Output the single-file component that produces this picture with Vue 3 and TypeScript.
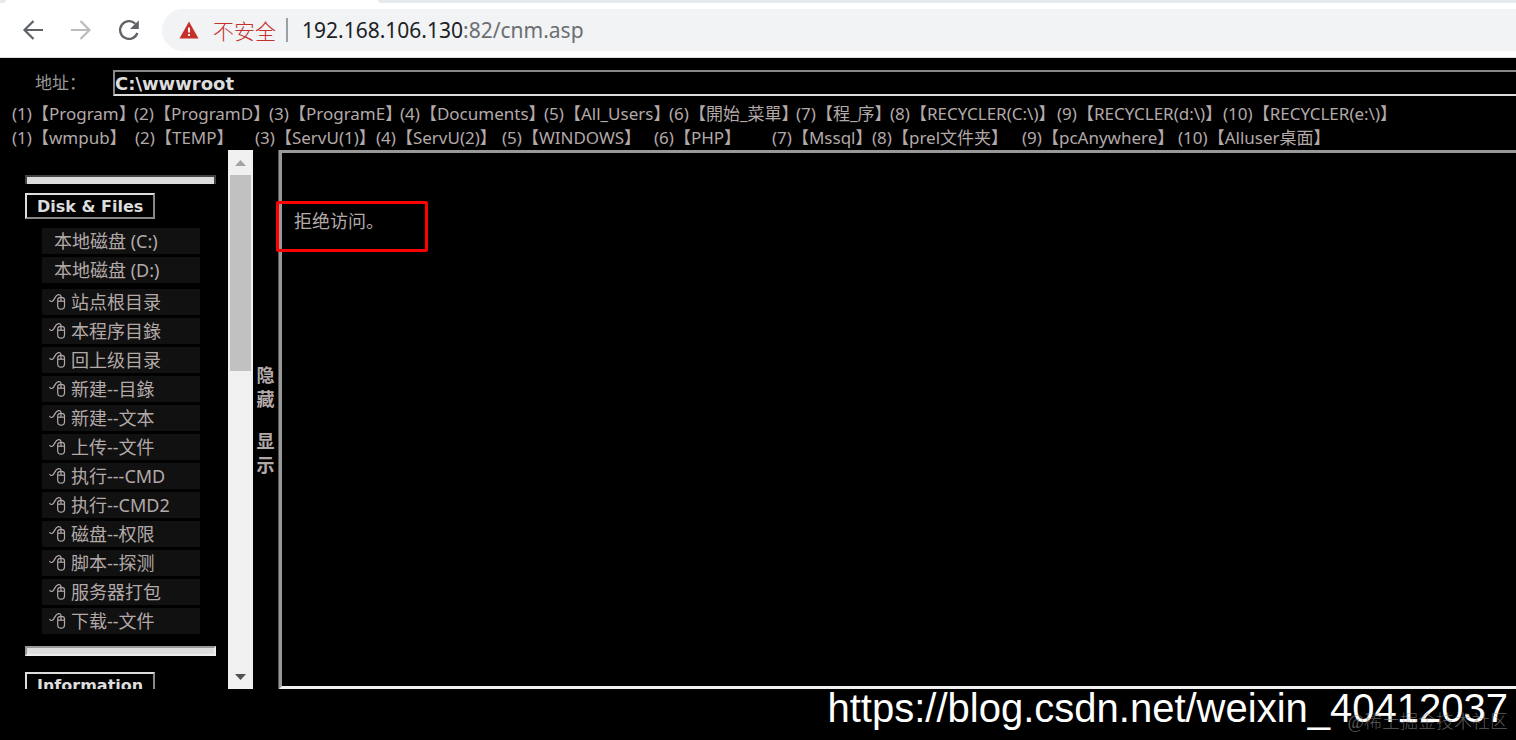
<script setup lang="ts">
import { ref } from 'vue'

interface NavItem {
  label: string
  icon: boolean
}

const path = ref<string>('C:\\wwwroot')

const systemLinks: string[] = [
  '(1)【Program】',
  '(2)【ProgramD】',
  '(3)【ProgramE】',
  '(4)【Documents】',
  '(5)【All_Users】',
  '(6)【開始_菜單】',
  '(7)【程_序】',
  '(8)【RECYCLER(C:\\)】',
  '(9)【RECYCLER(d:\\)】',
  '(10)【RECYCLER(e:\\)】',
]

const serviceLinks: string[] = [
  '(1)【wmpub】',
  '(2)【TEMP】',
  '(3)【ServU(1)】',
  '(4)【ServU(2)】',
  '(5)【WINDOWS】',
  '(6)【PHP】',
  '(7)【Mssql】',
  '(8)【prel文件夹】',
  '(9)【pcAnywhere】',
  '(10)【Alluser桌面】',
]

const drives: NavItem[] = [
  { label: '本地磁盘 (C:)', icon: false },
  { label: '本地磁盘 (D:)', icon: false },
]

const actions: NavItem[] = [
  '站点根目录',
  '本程序目錄',
  '回上级目录',
  '新建--目錄',
  '新建--文本',
  '上传--文件',
  '执行---CMD',
  '执行--CMD2',
  '磁盘--权限',
  '脚本--探测',
  '服务器打包',
  '下载--文件',
].map((label) => ({ label, icon: true }))

const groups: NavItem[][] = [drives, actions]
</script>

<template>
  <div class="page">
    <div class="tab-strip"><div class="tab"></div></div>
    <header class="toolbar">
      <button class="tool" type="button" aria-label="Back">
        <svg width="24" height="24" viewBox="0 0 24 24" fill="none" stroke="#5f6368" stroke-width="2.2">
          <path d="M22 12H4M12.500 3L3.500 12L12.500 21" />
        </svg>
      </button>
      <button class="tool" type="button" aria-label="Forward">
        <svg width="24" height="24" viewBox="0 0 24 24" fill="none" stroke="#babcbe" stroke-width="2.2">
          <path d="M2 12H20M11.500 3L20.500 12L11.500 21" />
        </svg>
      </button>
      <button class="tool" type="button" aria-label="Reload">
        <svg width="24" height="24" viewBox="0 0 24 24" fill="none">
          <path d="M18.300 5.700A8.900 8.900 0 1 0 20.400 15" stroke="#5f6368" stroke-width="2.300" />
          <path d="M21.800 2.200V11H13Z" fill="#5f6368" />
        </svg>
      </button>
      <div class="omnibox">
        <svg class="warn" width="20" height="18" viewBox="0 0 20 18">
          <path d="M10 0.500L19.500 17.500H0.500Z" fill="#c5302a" />
          <path d="M9 6.500H11V11.500H9ZM9 13H11V15H9Z" fill="#f1f3f4" />
        </svg>
        <span class="insecure">不安全</span>
        <span class="divider"></span>
        <span class="url">192.168.106.130<span class="url-path">:82/cnm.asp</span></span>
      </div>
    </header>

    <div class="top-frame">
      <div class="address">
        <label for="path">地址：</label>
        <input id="path" v-model="path" type="text" />
      </div>
      <nav class="links system">
        <a v-for="link in systemLinks" :key="link" href="#">{{ link }}</a>
      </nav>
      <nav class="links service">
        <a v-for="link in serviceLinks" :key="link" href="#">{{ link }}</a>
      </nav>
    </div>

    <main class="panes">
      <aside class="sidebar">
        <div class="rule rule-cut"></div>
        <button class="heading" type="button">Disk &amp; Files</button>
        <ul v-for="(group, index) in groups" :key="index" class="menu">
          <li v-for="item in group" :key="item.label">
            <a href="#" :class="{ plain: !item.icon }">
              <svg v-if="item.icon" width="17" height="18" viewBox="0 0 17 18" fill="none" stroke="#b3a9a9" stroke-width="1.200">
                <path d="M0.600 6.800C1.200 8.800 3.200 9.200 4.600 7.200C6 5 6.600 2 9.300 1.600C11.300 1.400 12 2.500 12 4V8" />
                <path d="M8.700 7C8.700 5 9.800 4.300 12.100 4.300S15.500 5 15.500 7V12.700C15.500 15 14.300 16.200 12.100 16.200S8.700 15 8.700 12.700Z" />
                <path d="M8.700 8.200H15.500" />
              </svg>
              <span>{{ item.label }}</span>
            </a>
          </li>
        </ul>
        <div class="rule rule-full"></div>
        <button class="heading" type="button">Information</button>
      </aside>

      <div class="scrollbar">
        <button type="button" aria-label="Scroll up">
          <svg width="11" height="6" viewBox="0 0 11 6"><path d="M0 6L5.500 0L11 6Z" fill="#a3a3a3" /></svg>
        </button>
        <div class="track"><div class="thumb"></div></div>
        <button type="button" aria-label="Scroll down">
          <svg width="11" height="6" viewBox="0 0 11 6"><path d="M0 0H11L5.500 6Z" fill="#505050" /></svg>
        </button>
      </div>

      <div class="toggles">
        <button type="button">隐藏</button>
        <button type="button">显示</button>
      </div>

      <div class="content">
        <section class="result">
          <p>拒绝访问。</p>
        </section>
        <div class="marker"></div>
      </div>
    </main>

    <footer class="bottom">
      <span class="source">https://blog.csdn.net/weixin_40412037</span>
      <span class="community">@稀土掘金技术社区</span>
    </footer>
  </div>
</template>

<style>
body {
  margin: 0;
  background: #000;
}
</style>

<style scoped>
.page {
  height: 100vh;
  display: flex;
  flex-direction: column;
  overflow: hidden;
  background: #000;
  color: #b3a9a9;
  font-family: 'Noto Sans', 'Noto Sans CJK SC', sans-serif;
}
.page * {
  box-sizing: border-box;
}
button {
  padding: 0;
  border: 0;
  background: none;
  color: inherit;
  font-family: inherit;
}
a {
  color: inherit;
  text-decoration: none;
  white-space: nowrap;
}
.tab-strip {
  flex: none;
  height: 3px;
  padding-left: 5px;
  background: #e7eaed;
}
.tab {
  width: 374px;
  height: 3px;
  border-radius: 3px 3px 0 0;
  background: #fff;
}
.toolbar {
  flex: none;
  height: 55px;
  display: flex;
  align-items: center;
  padding: 0 0 0 21px;
  gap: 24px;
  background: #fff;
  border-bottom: 1px solid #dcdcdc;
}
.tool {
  width: 24px;
  height: 24px;
}
.tool svg {
  display: block;
}
.omnibox {
  flex: 1;
  height: 42px;
  margin-left: -3px;
  padding-left: 17px;
  display: flex;
  align-items: center;
  border-radius: 21px 0 0 21px;
  background: #f1f3f4;
  font-size: 21px;
  white-space: nowrap;
}
.warn {
  margin-right: 14px;
}
.insecure {
  color: #c5302a;
  font-family: 'Noto Sans CJK SC', sans-serif;
  font-weight: 300;
}
.divider {
  width: 2px;
  height: 24px;
  margin: 0 14px 0 10px;
  background: #9aa0a6;
}
.url {
  color: #202124;
}
.url-path {
  color: #6b6f73;
}
.top-frame {
  flex: none;
  padding: 12px 0 0 12px;
}
.address {
  display: flex;
  align-items: center;
  height: 26px;
  margin-bottom: 6px;
}
.address label {
  flex: none;
  width: 101px;
  padding-left: 23px;
  color: #999;
  font-size: 17px;
  line-height: 24px;
}
.address input {
  flex: 1;
  min-width: 0;
  height: 26px;
  padding: 0;
  border: 2px solid #888;
  border-width: 2px 0 2px 2px;
  border-bottom-color: #ddd;
  outline: 0;
  background: #000;
  color: #ddd;
  font: bold 18px 'DejaVu Sans', sans-serif;
}
.links {
  display: grid;
  height: 24px;
  line-height: 24px;
  font-size: 17px;
}
.system {
  grid-template-columns: 122px 135px 131px 144px 125px 127px 94px 167px 166px 1fr;
}
.service {
  grid-template-columns: 123px 120px 121px 126px 152px 118px 100px 150px 156px 1fr;
}
.panes {
  flex: 1;
  min-height: 0;
  display: flex;
}
.sidebar {
  flex: none;
  width: 228px;
  padding: 25px 12px 0 25px;
  overflow: hidden;
}
.rule {
  background: #ddd;
}
.rule-cut {
  height: 9px;
  margin-bottom: 9px;
  border: 2px solid #444;
  border-bottom: 0;
}
.rule-full {
  height: 10px;
  margin: 12px 0 16px;
  border: 2px solid #999;
  border-right-color: #eee;
  border-bottom-color: #eee;
}
.heading {
  display: block;
  height: 26px;
  padding: 0 10px;
  border: 2px solid #ddd;
  border-right-color: #888;
  border-bottom-color: #888;
  color: #ddd;
  font: bold 16px 'DejaVu Sans', sans-serif;
}
.menu {
  margin: 0 16px 0 17px;
  padding: 0;
  list-style: none;
  display: grid;
  gap: 3px;
}
.heading + .menu {
  margin-top: 9px;
  margin-bottom: 6px;
}
.menu a {
  display: flex;
  align-items: center;
  gap: 5px;
  height: 26px;
  padding-left: 7px;
  background: #111;
  font-size: 18px;
  line-height: 26px;
}
.menu .plain {
  padding-left: 12px;
}
.scrollbar {
  flex: none;
  width: 25px;
  display: flex;
  flex-direction: column;
  background: #f0f0f0;
}
.scrollbar button {
  height: 25px;
  display: flex;
  align-items: center;
  justify-content: center;
}
.track {
  flex: 1;
  padding: 0 2px;
}
.thumb {
  height: 40%;
  background: #c1c1c1;
}
.toggles {
  flex: none;
  width: 25px;
  display: flex;
  flex-direction: column;
  align-items: center;
  justify-content: center;
  gap: 18px;
}
.toggles button {
  width: 18px;
  font-size: 18px;
  font-weight: bold;
  line-height: 24px;
}
.content {
  flex: 1;
  min-width: 0;
  position: relative;
  display: flex;
  border-left: 1px solid #555;
}
.result {
  flex: 1;
  padding: 55px 12px;
  border: 3px solid #999;
  border-right: 0;
  border-bottom-color: #f0f0f0;
}
.result p {
  margin: 0;
  font-size: 18px;
  line-height: 26px;
}
.marker {
  position: absolute;
  left: -3px;
  top: 51px;
  width: 152px;
  height: 51px;
  border: 3px solid #f00;
  border-radius: 2px;
}
.bottom {
  flex: none;
  height: 51px;
  position: relative;
  text-align: right;
  padding-right: 8px;
  white-space: nowrap;
}
.source {
  color: #fff;
  font: 40px/38px 'Liberation Sans', sans-serif;
}
.community {
  position: absolute;
  right: 8px;
  bottom: 6px;
  color: rgba(150, 150, 150, 0.6);
  font: 18px/24px 'Liberation Serif', 'Noto Sans CJK SC', serif;
  font-weight: 300;
}
</style>
